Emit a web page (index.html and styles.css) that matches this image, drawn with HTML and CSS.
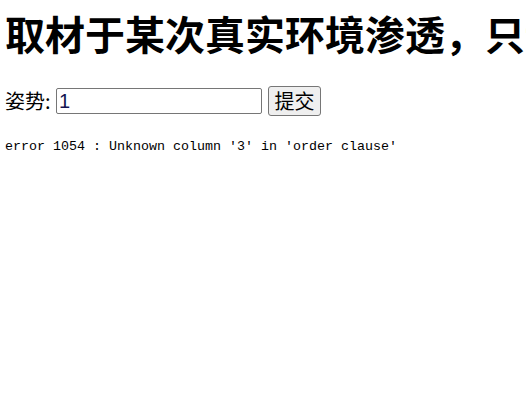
FILE: index.html
```html
<!DOCTYPE html>
<html lang="zh-CN">
<head>
<meta charset="utf-8">
<title>随便注</title>
<link rel="stylesheet" href="styles.css">
</head>
<body>
<div class="page">
  <h1 class="title">取材于某次真实环境渗透，只说一句话：开发和安全缺一不可</h1>
  <form class="inject-form" method="get">
    <label class="label" for="inject">姿势:</label>
    <input class="field" id="inject" type="text" name="inject" value="1">
    <input class="submit" type="submit" value="提交">
  </form>
  <pre class="error">error 1054 : Unknown column '3' in 'order clause'</pre>
</div>
</body>
</html>
```
FILE: styles.css
```css
html, body {
  margin: 0;
  padding: 0;
  background: #ffffff;
  overflow: hidden;
}

.page {
  padding: 0 5px;
  color: #000000;
  font-family: "Noto Sans CJK SC", "Liberation Sans", sans-serif;
}

.title {
  margin: 13px 0 0;
  font-size: 40px;
  line-height: 40px;
  font-weight: 700;
  white-space: nowrap;
}

.inject-form {
  display: flex;
  align-items: center;
  height: 30px;
  margin: 33px 0 0;
}

.label {
  flex: 0 0 51px;
  font-size: 20px;
  line-height: 30px;
}

.field {
  box-sizing: border-box;
  width: 206px;
  height: 26px;
  margin: 0;
  padding: 0 2px;
  border: 1px solid #767676;
  border-radius: 2px;
  background: #ffffff;
  color: #141450;
  font-family: "Liberation Sans", sans-serif;
  font-size: 20px;
  line-height: 24px;
}

.submit {
  box-sizing: border-box;
  width: 53px;
  height: 30px;
  margin: 0 0 0 6px;
  padding: 0;
  border: 1px solid #767676;
  border-radius: 3px;
  background: #efefef;
  color: #000000;
  font-family: "Noto Sans CJK SC", sans-serif;
  font-size: 20px;
  line-height: 28px;
}

.error {
  margin: 23px 0 0;
  font-family: "Liberation Mono", monospace;
  font-size: 13.33px;
  line-height: 16px;
  color: #000000;
}
```
